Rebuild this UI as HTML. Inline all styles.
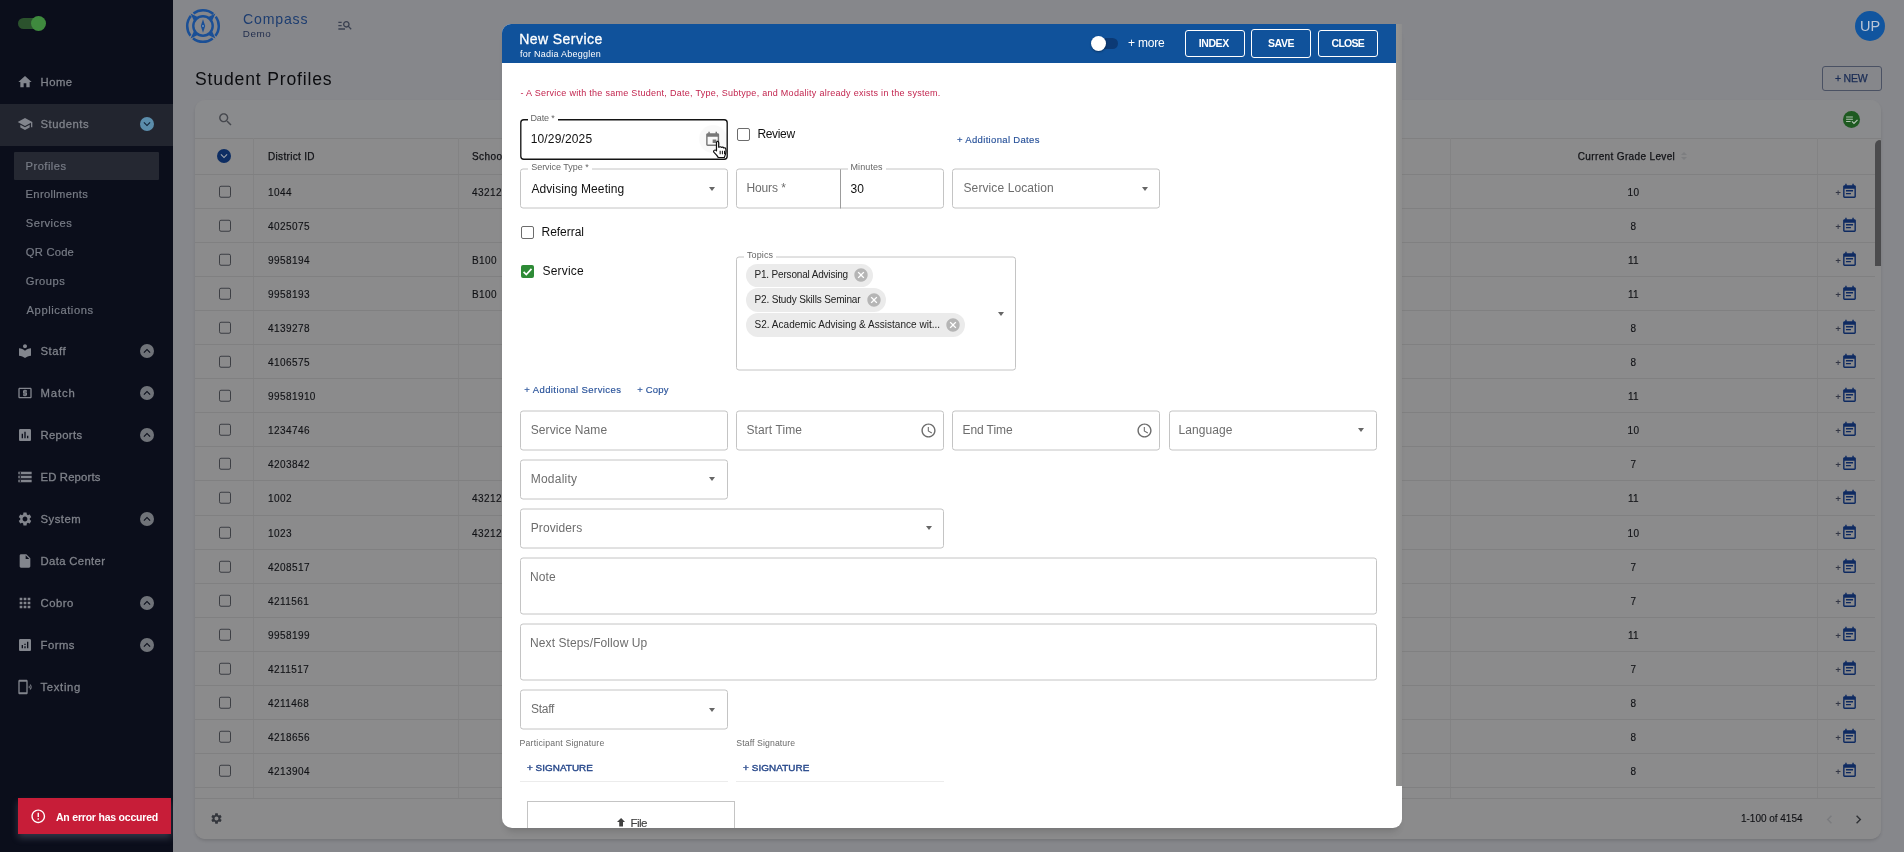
<!DOCTYPE html>
<html lang="en">
<head>
<meta charset="utf-8">
<title>Compass - Student Profiles</title>
<style>
*{box-sizing:border-box;margin:0;padding:0}
html,body{width:1904px;height:852px;overflow:hidden}
body{position:relative;background:#86878b;font-family:"Liberation Sans",Arial,sans-serif;color:#0c0d10;font-size:11px}
.a{position:absolute}
.t{position:absolute;white-space:nowrap;line-height:1;transform:translateY(-50%)}
svg{display:block}
#side,#main,#dlg{will-change:transform}
/* ---------- sidebar ---------- */
#side{position:absolute;left:0;top:0;width:173px;height:852px;background:#0b0e1b}
#side .mi{margin-top:1px;position:absolute;left:40px;color:#7f828a;font-size:11.3px;letter-spacing:.5px;-webkit-text-stroke:.3px #7f828a;white-space:nowrap;line-height:1;transform:translateY(-50%)}
#side .sub{margin-top:1.3px;position:absolute;left:25px;color:#787c86;font-size:11.2px;letter-spacing:.45px;-webkit-text-stroke:.2px #787c86;white-space:nowrap;line-height:1;transform:translateY(-50%)}
#side .ic{position:absolute;left:17px;width:16px;height:16px;transform:translateY(-50%)}
#side .ch{position:absolute;left:140px;width:14px;height:14px;border-radius:50%;background:#707379;transform:translateY(-50%)}
/* ---------- main ---------- */
#card{position:absolute;left:195px;top:100px;width:1686px;height:739px;background:#8b8b8c;border-radius:10px;box-shadow:0 2px 3px rgba(0,0,0,.12);overflow:hidden}
.hl{position:absolute;left:0;width:1680px;height:1px;background:#808081}
.vl{position:absolute;top:38px;width:1px;height:660px;background:#838384}
.cell{position:absolute;white-space:nowrap;line-height:1;transform:translateY(-50%);font-size:10px;color:#111216;letter-spacing:.42px;margin-top:0;-webkit-text-stroke:.12px #111216}
.cb{position:absolute;left:23.5px;width:12.5px;height:12.5px;border:1.5px solid #3d3f44;border-radius:2px;transform:translateY(-50%)}
/* ---------- dialog ---------- */
#dlg{position:absolute;left:502px;top:24px;width:900px;height:804px;background:#fff;box-shadow:0 7px 7px -4px rgba(0,0,0,.16);border-radius:9px 0 9px 10px;overflow:hidden}
#dh{position:absolute;left:0;top:0;width:894px;height:38.5px;background:#10529b}
.fld{position:absolute;border:1px solid #c4c4c4;border-radius:3px;background:#fff;transform:translateY(.5px)}
.lab{margin-top:-.6px;position:absolute;white-space:nowrap;line-height:1;transform:translateY(-50%);font-size:12px;color:#6d6d6d;letter-spacing:.1px}
.val{position:absolute;white-space:nowrap;line-height:1;transform:translateY(-50%);font-size:12px;color:#111}
.fl{position:absolute;white-space:nowrap;line-height:1;transform:translateY(-50%);font-size:9px;color:#666;background:#fff;padding:0 3px;letter-spacing:.1px}
.lnk{-webkit-text-stroke:.15px #28529a;position:absolute;white-space:nowrap;line-height:1;transform:translateY(-50%);font-size:9.5px;color:#28529a;letter-spacing:.2px}
.dd{position:absolute;width:0;height:0;border-left:3.5px solid transparent;border-right:3.5px solid transparent;border-top:4px solid #666}
</style>
</head>
<body>

<!-- ================= SIDEBAR ================= -->
<div id="side">
<div class="a" style="left:18px;top:18px;width:26px;height:11px;border-radius:6px;background:#2b522d"></div>
<div class="a" style="left:31px;top:16px;width:15px;height:15px;border-radius:50%;background:#3f8a3e"></div>
<div class="a" style="left:0;top:104px;width:173px;height:42px;background:#22252f"></div>
<div class="a" style="left:14px;top:152px;width:145px;height:28px;background:#252832;border-radius:1px"></div>
<svg class="ic" style="top:82px" viewBox="0 0 24 24"><path fill="#82858d" d="M10 20v-6h4v6h5v-8h3L12 3 2 12h3v8z"/></svg>
<div class="mi" id="mi_Home" style="top:82px;left:40.50px">Home</div>
<svg class="ic" style="top:124px" viewBox="0 0 24 24"><path fill="#82858d" d="M5 13.18v4L12 21l7-3.82v-4L12 17l-7-3.82zM12 3L1 9l11 6 9-4.91V17h2V9L12 3z"/></svg>
<div class="mi" id="mi_Students" style="top:124px;left:40.50px">Students</div>
<div class="ch" style="top:124px;background:#5b8dab"><svg viewBox="0 0 24 24" width="14" height="14"><path fill="#12253a" d="M16.59 8.59L12 13.17 7.410 8.590 6 10l6 6 6-6z"/></svg></div>
<svg class="ic" style="top:351px" viewBox="0 0 24 24"><path fill="#82858d" d="M12 11.55C9.64 9.35 6.48 8 3 8v11c3.48 0 6.64 1.35 9 3.55 2.36-2.19 5.52-3.55 9-3.55V8c-3.48 0-6.64 1.35-9 3.55zM12 8c1.66 0 3-1.34 3-3s-1.34-3-3-3-3 1.34-3 3 1.34 3 3 3z"/></svg>
<div class="mi" id="mi_Staff" style="top:351px;left:40.50px">Staff</div>
<div class="ch" style="top:351px"><svg viewBox="0 0 24 24" width="14" height="14"><path fill="#0b0e1b" d="M12 8l-6 6 1.41 1.41L12 10.83l4.59 4.58L18 14z"/></svg></div>
<svg class="ic" style="top:393px" viewBox="0 0 24 24"><path fill="#82858d" d="M11 17h2v-1h1c.55 0 1-.45 1-1v-3c0-.55-.45-1-1-1h-3v-1h4V8h-2V7h-2v1h-1c-.55 0-1 .45-1 1v3c0 .55.45 1 1 1h3v1H9v2h2v1zm9-13H4c-1.11 0-1.99.89-1.99 2L2 18c0 1.11.89 2 2 2h16c1.11 0 2-.89 2-2V6c0-1.11-.89-2-2-2zm0 14H4V6h16v12z"/></svg>
<div class="mi" id="mi_Match" style="top:393px;left:40.50px;letter-spacing:0.875px">Match</div>
<div class="ch" style="top:393px"><svg viewBox="0 0 24 24" width="14" height="14"><path fill="#0b0e1b" d="M12 8l-6 6 1.41 1.41L12 10.83l4.59 4.58L18 14z"/></svg></div>
<svg class="ic" style="top:435px" viewBox="0 0 24 24"><path fill="#82858d" d="M19 3H5c-1.1 0-2 .9-2 2v14c0 1.1.9 2 2 2h14c1.1 0 2-.9 2-2V5c0-1.1-.9-2-2-2zM9 17H7v-7h2v7zm4 0h-2V7h2v10zm4 0h-2v-4h2v4z"/></svg>
<div class="mi" id="mi_Reports" style="top:435px;letter-spacing:0.333px;left:40.50px">Reports</div>
<div class="ch" style="top:435px"><svg viewBox="0 0 24 24" width="14" height="14"><path fill="#0b0e1b" d="M12 8l-6 6 1.41 1.41L12 10.83l4.59 4.58L18 14z"/></svg></div>
<svg class="ic" style="top:477px" viewBox="0 0 24 24"><path fill="#82858d" d="M2 20h20v-4H2v4zm2-3h2v2H4v-2zM2 4v4h20V4H2zm4 3H4V5h2v2zm-4 7h20v-4H2v4zm2-3h2v2H4v-2z"/></svg>
<div class="mi" id="mi_EDReports" style="top:477px;letter-spacing:0.167px;left:40.50px">ED Reports</div>
<svg class="ic" style="top:519px" viewBox="0 0 24 24"><path fill="#82858d" d="M19.14 12.94c.04-.3.06-.61.06-.94 0-.32-.02-.64-.07-.94l2.03-1.58c.18-.14.23-.41.12-.61l-1.92-3.32c-.12-.22-.37-.29-.59-.22l-2.39.96c-.5-.38-1.03-.7-1.62-.94l-.36-2.54c-.04-.24-.24-.41-.48-.41h-3.84c-.24 0-.43.17-.47.41l-.36 2.54c-.59.24-1.13.57-1.62.94l-2.39-.96c-.22-.08-.47 0-.59.22L2.74 8.87c-.12.21-.08.47.12.61l2.03 1.58c-.05.3-.09.63-.09.94s.02.64.07.94l-2.03 1.58c-.18.14-.23.41-.12.61l1.92 3.32c.12.22.37.29.59.22l2.39-.96c.5.38 1.03.7 1.62.94l.36 2.54c.05.24.24.41.48.41h3.84c.24 0 .44-.17.47-.41l.36-2.54c.59-.24 1.13-.56 1.62-.94l2.39.96c.22.08.47 0 .59-.22l1.92-3.32c.12-.22.07-.47-.12-.61l-2.01-1.58zM12 15.6c-1.98 0-3.6-1.62-3.6-3.6s1.62-3.6 3.6-3.6 3.6 1.62 3.6 3.6-1.62 3.6-3.6 3.6z"/></svg>
<div class="mi" id="mi_System" style="top:519px;left:40.50px;letter-spacing:0.500px">System</div>
<div class="ch" style="top:519px"><svg viewBox="0 0 24 24" width="14" height="14"><path fill="#0b0e1b" d="M12 8l-6 6 1.41 1.41L12 10.83l4.59 4.58L18 14z"/></svg></div>
<svg class="ic" style="top:561px" viewBox="0 0 24 24"><path fill="#82858d" d="M6 2c-1.1 0-1.99.9-1.99 2L4 20c0 1.1.89 2 1.99 2H18c1.1 0 2-.9 2-2V8l-6-6H6zm7 7V3.5L18.5 9H13z"/></svg>
<div class="mi" id="mi_DataCenter" style="top:561px;letter-spacing:0.350px;left:40.50px">Data Center</div>
<svg class="ic" style="top:603px" viewBox="0 0 24 24"><path fill="#82858d" d="M4 8h4V4H4v4zm6 12h4v-4h-4v4zm-6 0h4v-4H4v4zm0-6h4v-4H4v4zm6 0h4v-4h-4v4zm6-10v4h4V4h-4zm-6 4h4V4h-4v4zm6 6h4v-4h-4v4zm0 6h4v-4h-4v4z"/></svg>
<div class="mi" id="mi_Cobro" style="top:603px;left:40.50px;letter-spacing:0.500px">Cobro</div>
<div class="ch" style="top:603px"><svg viewBox="0 0 24 24" width="14" height="14"><path fill="#0b0e1b" d="M12 8l-6 6 1.41 1.41L12 10.83l4.59 4.58L18 14z"/></svg></div>
<svg class="ic" style="top:645px" viewBox="0 0 24 24"><path fill="#82858d" d="M19 3H5c-1.1 0-2 .9-2 2v14c0 1.1.9 2 2 2h14c1.1 0 2-.9 2-2V5c0-1.1-.9-2-2-2zM9 17H7v-5h2v5zm4 0h-2v-3h2v3zm0-5h-2v-2h2v2zm4 5h-2V7h2v10z"/></svg>
<div class="mi" id="mi_Forms" style="top:645px;left:40.50px">Forms</div>
<div class="ch" style="top:645px"><svg viewBox="0 0 24 24" width="14" height="14"><path fill="#0b0e1b" d="M12 8l-6 6 1.41 1.41L12 10.83l4.59 4.58L18 14z"/></svg></div>
<svg class="ic" style="top:687px" viewBox="0 0 24 24"><path fill="#82858d" d="M14 1H4c-1.1 0-2 .9-2 2v18c0 1.1.9 2 2 2h10c1.1 0 2-.9 2-2V3c0-1.1-.9-2-2-2zm0 19H4V4h10v16zm4.2-10.3l-.9.9c.7.7.7 1.9 0 2.6l.9.9c1.3-1.2 1.3-3.100 0-4.400zM20.100 7.700l-1 1c1.800 1.900 1.800 4.700 0 6.600l1 1c2.500-2.400 2.500-6.200 0-8.600z"/></svg>
<div class="mi" id="mi_Texting" style="top:687px;letter-spacing:0.667px;left:40.50px">Texting</div>
<div class="sub" id="sub_Profiles" style="top:166px;left:25.60px">Profiles</div>
<div class="sub" id="sub_Enrollments" style="top:194px;letter-spacing:0.310px;left:25.60px">Enrollments</div>
<div class="sub" id="sub_Services" style="top:223px;left:25.80px">Services</div>
<div class="sub" id="sub_QRCode" style="top:252px;letter-spacing:0.233px;left:25.80px">QR Code</div>
<div class="sub" id="sub_Groups" style="top:281px;left:25.80px">Groups</div>
<div class="sub" id="sub_Applications" style="top:310px;letter-spacing:0.559px;left:26.60px">Applications</div>
<div class="a" style="left:18px;top:798px;width:153px;height:36px;background:#c71d38;box-shadow:0 4px 7px rgba(150,160,185,.28)"></div>
<svg class="a" style="left:29.850px;top:808px" width="16.500" height="16.500" viewBox="0 0 24 24"><path fill="#fff" d="M11 15h2v2h-2zm0-8h2v6h-2zm.99-5C6.47 2 2 6.48 2 12s4.47 10 9.990 10C17.520 22 22 17.520 22 12S17.520 2 11.990 2zM12 20c-4.420 0-8-3.580-8-8s3.580-8 8-8 8 3.580 8 8-3.580 8-8 8z"/></svg>
<div class="t" id="toast" style="left:56px;top:816.500px;font-size:10.500px;font-weight:bold;color:#fff;letter-spacing:-0.211px">An error has occured</div>
</div>

<!-- ================= MAIN ================= -->
<div id="main">
<svg class="a" style="left:185px;top:7.500px" width="36" height="36" viewBox="0 0 36 36"><g fill="none" stroke="#1a4f96">
<circle cx="18" cy="18" r="15.800" stroke-width="2.500" stroke-dasharray="21.300 3.520" stroke-dashoffset="10.650"/><circle cx="18" cy="18" r="9.700" stroke-width="2.400"/></g>
<path fill="#1a4f96" d="M23.30 27.12L30.45 30.45L27.12 23.30zM8.88 23.30L5.55 30.45L12.70 27.12zM12.70 8.88L5.55 5.55L8.88 12.70zM27.12 12.70L30.45 5.55L23.30 8.88z"/>
<path fill="#1a4f96" d="M18 11.300l2.200 6.700-2.200 6.700-2.200-6.700z"/><circle cx="18" cy="18" r=".9" fill="#7d9cc4"/></svg>
<div class="t" id="compass" style="left:243.00px;top:18.500px;font-size:14.100px;color:#1d3d70;letter-spacing:0.833px">Compass</div>
<div class="t" id="demo" style="left:242.80px;top:33.500px;font-size:9.900px;color:#232f4e;letter-spacing:0.500px">Demo</div>
<svg class="a" style="left:337px;top:17.300px" width="16" height="16" viewBox="0 0 24 24"><path fill="#3a4050" d="M7 9H2V7h5v2zm0 3H2v2h5v-2zm13.59 7l-3.83-3.83c-.8.52-1.74.83-2.76.83-2.76 0-5-2.24-5-5s2.24-5 5-5 5 2.24 5 5c0 1.02-.31 1.96-.83 2.75L22 17.59 20.59 19zM17 11c0-1.65-1.35-3-3-3s-3 1.35-3 3 1.35 3 3 3 3-1.35 3-3zM2 19h10v-2H2v2z"/></svg>
<div class="a" style="left:1855px;top:11px;width:30px;height:30px;border-radius:50%;background:#11559f"></div>
<div class="t" style="left:1855px;top:25.500px;width:30px;text-align:center;font-size:14.500px;color:#bcc6d6">UP</div>
<div class="t" id="title" style="left:195px;top:79.500px;font-size:17.600px;color:#0b0c0f;letter-spacing:.83px">Student Profiles</div>
<div class="a" style="left:1822px;top:65.500px;width:59.500px;height:25px;border:1px solid #4a5163;border-radius:3px"></div>
<div class="t" id="new" style="left:1835.00px;top:77.700px;font-size:10.500px;color:#1a2c55;letter-spacing:-0.250px;-webkit-text-stroke:.25px #1a2c55">+ NEW</div>
<div id="card">
<div class="a" style="left:0;top:0;width:1686px;height:38px;background:#8a8b8d"></div>
<svg class="a" style="left:21.500px;top:10.800px" width="17" height="17" viewBox="0 0 24 24"><path fill="#45474d" d="M15.5 14h-.79l-.28-.27C15.41 12.59 16 11.11 16 9.5 16 5.91 13.09 3 9.5 3S3 5.91 3 9.5 5.91 16 9.5 16c1.61 0 3.09-.59 4.23-1.57l.27.28v.79l5 4.99L20.49 19l-4.99-5zm-6 0C7.01 14 5 11.99 5 9.5S7.01 5 9.5 5 14 7.01 14 9.5 11.99 14 9.5 14z"/></svg>
<div class="a" style="left:1648px;top:11px;width:17px;height:17px;border-radius:50%;background:#1e5a21"></div>
<svg class="a" style="left:1649.800px;top:12.800px" width="13.500" height="13.500" viewBox="0 0 24 24"><path fill="#b2c4b3" d="M14 10H2v2h12v-2zm0-4H2v2h12V6zM2 16h8v-2H2v2zm19.5-4.5L23 13l-6.99 7-4.51-4.5L13 14l3.01 3 5.49-5.5z"/></svg>
<div class="hl" style="top:38px;width:1686px"></div>
<div class="vl" style="left:58px"></div>
<div class="vl" style="left:263px"></div>
<div class="vl" style="left:1255px"></div>
<div class="vl" style="left:1622px"></div>
<div class="a" style="left:22px;top:49px;width:14px;height:14px;border-radius:50%;background:#0d2d63"></div>
<svg class="a" style="left:22px;top:49px" width="14" height="14" viewBox="0 0 24 24"><path fill="#9aa0aa" d="M16.590 8.590L12 13.170 7.410 8.590 6 10l6 6 6-6z"/></svg>
<div class="cell" id="hDistrict" style="left:73px;top:56.500px;-webkit-text-stroke:.25px #111216;letter-spacing:0.320px">District ID</div>
<div class="cell" style="left:277px;top:56.500px;-webkit-text-stroke:.25px #111216">Schoo</div>
<div class="cell" id="hCGL" style="left:1382.80px;top:56.500px;-webkit-text-stroke:.25px #111216;letter-spacing:0.356px">Current Grade Level</div>
<div class="a" style="left:1486px;top:51.500px;border-left:3px solid transparent;border-right:3px solid transparent;border-bottom:3.500px solid #7d7e80"></div>
<div class="a" style="left:1486px;top:57px;border-left:3px solid transparent;border-right:3px solid transparent;border-top:3.500px solid #7d7e80"></div>
<div class="hl" style="top:74px"></div>
<div class="cb" style="top:91.5px"></div>
<div class="cell" style="left:73px;top:92.5px">1044</div>
<div class="cell" style="left:277px;top:92.5px">43212</div>
<div class="cell" style="left:1255px;width:367px;text-align:center;top:92.5px">10</div>
<div class="cell" style="left:1640.5px;top:92.5px;font-size:9px;color:#2a3350">+</div>
<svg class="a" style="left:1646.300px;top:82.6px" width="17" height="17" viewBox="0 0 24 24"><path fill="#0e2a61" d="M17 10H7v2h10v-2zm2-7h-1V1h-2v2H8V1H6v2H5c-1.11 0-1.99.9-1.99 2L3 19c0 1.1.89 2 2 2h14c1.1 0 2-.9 2-2V5c0-1.1-.9-2-2-2zm0 16H5V8h14v11zm-5-5H7v2h7v-2z"/></svg>
<div class="hl" style="top:108px"></div>
<div class="cb" style="top:125.5px"></div>
<div class="cell" style="left:73px;top:126.5px">4025075</div>
<div class="cell" style="left:1255px;width:367px;text-align:center;top:126.5px">8</div>
<div class="cell" style="left:1640.5px;top:126.5px;font-size:9px;color:#2a3350">+</div>
<svg class="a" style="left:1646.300px;top:116.6px" width="17" height="17" viewBox="0 0 24 24"><path fill="#0e2a61" d="M17 10H7v2h10v-2zm2-7h-1V1h-2v2H8V1H6v2H5c-1.11 0-1.99.9-1.99 2L3 19c0 1.1.89 2 2 2h14c1.1 0 2-.9 2-2V5c0-1.1-.9-2-2-2zm0 16H5V8h14v11zm-5-5H7v2h7v-2z"/></svg>
<div class="hl" style="top:142px"></div>
<div class="cb" style="top:159.5px"></div>
<div class="cell" style="left:73px;top:160.5px">9958194</div>
<div class="cell" style="left:277px;top:160.5px">B100</div>
<div class="cell" style="left:1255px;width:367px;text-align:center;top:160.5px">11</div>
<div class="cell" style="left:1640.5px;top:160.5px;font-size:9px;color:#2a3350">+</div>
<svg class="a" style="left:1646.300px;top:150.6px" width="17" height="17" viewBox="0 0 24 24"><path fill="#0e2a61" d="M17 10H7v2h10v-2zm2-7h-1V1h-2v2H8V1H6v2H5c-1.11 0-1.99.9-1.99 2L3 19c0 1.1.89 2 2 2h14c1.1 0 2-.9 2-2V5c0-1.1-.9-2-2-2zm0 16H5V8h14v11zm-5-5H7v2h7v-2z"/></svg>
<div class="hl" style="top:176px"></div>
<div class="cb" style="top:193.5px"></div>
<div class="cell" style="left:73px;top:194.5px">9958193</div>
<div class="cell" style="left:277px;top:194.5px">B100</div>
<div class="cell" style="left:1255px;width:367px;text-align:center;top:194.5px">11</div>
<div class="cell" style="left:1640.5px;top:194.5px;font-size:9px;color:#2a3350">+</div>
<svg class="a" style="left:1646.300px;top:184.6px" width="17" height="17" viewBox="0 0 24 24"><path fill="#0e2a61" d="M17 10H7v2h10v-2zm2-7h-1V1h-2v2H8V1H6v2H5c-1.11 0-1.99.9-1.99 2L3 19c0 1.1.89 2 2 2h14c1.1 0 2-.9 2-2V5c0-1.1-.9-2-2-2zm0 16H5V8h14v11zm-5-5H7v2h7v-2z"/></svg>
<div class="hl" style="top:210px"></div>
<div class="cb" style="top:227.5px"></div>
<div class="cell" style="left:73px;top:228.5px">4139278</div>
<div class="cell" style="left:1255px;width:367px;text-align:center;top:228.5px">8</div>
<div class="cell" style="left:1640.5px;top:228.5px;font-size:9px;color:#2a3350">+</div>
<svg class="a" style="left:1646.300px;top:218.6px" width="17" height="17" viewBox="0 0 24 24"><path fill="#0e2a61" d="M17 10H7v2h10v-2zm2-7h-1V1h-2v2H8V1H6v2H5c-1.11 0-1.99.9-1.99 2L3 19c0 1.1.89 2 2 2h14c1.1 0 2-.9 2-2V5c0-1.1-.9-2-2-2zm0 16H5V8h14v11zm-5-5H7v2h7v-2z"/></svg>
<div class="hl" style="top:244px"></div>
<div class="cb" style="top:261.5px"></div>
<div class="cell" style="left:73px;top:262.5px">4106575</div>
<div class="cell" style="left:1255px;width:367px;text-align:center;top:262.5px">8</div>
<div class="cell" style="left:1640.5px;top:262.5px;font-size:9px;color:#2a3350">+</div>
<svg class="a" style="left:1646.300px;top:252.6px" width="17" height="17" viewBox="0 0 24 24"><path fill="#0e2a61" d="M17 10H7v2h10v-2zm2-7h-1V1h-2v2H8V1H6v2H5c-1.11 0-1.99.9-1.99 2L3 19c0 1.1.89 2 2 2h14c1.1 0 2-.9 2-2V5c0-1.1-.9-2-2-2zm0 16H5V8h14v11zm-5-5H7v2h7v-2z"/></svg>
<div class="hl" style="top:278px"></div>
<div class="cb" style="top:295.5px"></div>
<div class="cell" style="left:73px;top:296.5px">99581910</div>
<div class="cell" style="left:1255px;width:367px;text-align:center;top:296.5px">11</div>
<div class="cell" style="left:1640.5px;top:296.5px;font-size:9px;color:#2a3350">+</div>
<svg class="a" style="left:1646.300px;top:286.6px" width="17" height="17" viewBox="0 0 24 24"><path fill="#0e2a61" d="M17 10H7v2h10v-2zm2-7h-1V1h-2v2H8V1H6v2H5c-1.11 0-1.99.9-1.99 2L3 19c0 1.1.89 2 2 2h14c1.1 0 2-.9 2-2V5c0-1.1-.9-2-2-2zm0 16H5V8h14v11zm-5-5H7v2h7v-2z"/></svg>
<div class="hl" style="top:312px"></div>
<div class="cb" style="top:329.5px"></div>
<div class="cell" style="left:73px;top:330.5px">1234746</div>
<div class="cell" style="left:1255px;width:367px;text-align:center;top:330.5px">10</div>
<div class="cell" style="left:1640.5px;top:330.5px;font-size:9px;color:#2a3350">+</div>
<svg class="a" style="left:1646.300px;top:320.6px" width="17" height="17" viewBox="0 0 24 24"><path fill="#0e2a61" d="M17 10H7v2h10v-2zm2-7h-1V1h-2v2H8V1H6v2H5c-1.11 0-1.99.9-1.99 2L3 19c0 1.1.89 2 2 2h14c1.1 0 2-.9 2-2V5c0-1.1-.9-2-2-2zm0 16H5V8h14v11zm-5-5H7v2h7v-2z"/></svg>
<div class="hl" style="top:346px"></div>
<div class="cb" style="top:363.5px"></div>
<div class="cell" style="left:73px;top:364.5px">4203842</div>
<div class="cell" style="left:1255px;width:367px;text-align:center;top:364.5px">7</div>
<div class="cell" style="left:1640.5px;top:364.5px;font-size:9px;color:#2a3350">+</div>
<svg class="a" style="left:1646.300px;top:354.6px" width="17" height="17" viewBox="0 0 24 24"><path fill="#0e2a61" d="M17 10H7v2h10v-2zm2-7h-1V1h-2v2H8V1H6v2H5c-1.11 0-1.99.9-1.99 2L3 19c0 1.1.89 2 2 2h14c1.1 0 2-.9 2-2V5c0-1.1-.9-2-2-2zm0 16H5V8h14v11zm-5-5H7v2h7v-2z"/></svg>
<div class="hl" style="top:380px"></div>
<div class="cb" style="top:397.5px"></div>
<div class="cell" style="left:73px;top:398.5px">1002</div>
<div class="cell" style="left:277px;top:398.5px">43212</div>
<div class="cell" style="left:1255px;width:367px;text-align:center;top:398.5px">11</div>
<div class="cell" style="left:1640.5px;top:398.5px;font-size:9px;color:#2a3350">+</div>
<svg class="a" style="left:1646.300px;top:388.6px" width="17" height="17" viewBox="0 0 24 24"><path fill="#0e2a61" d="M17 10H7v2h10v-2zm2-7h-1V1h-2v2H8V1H6v2H5c-1.11 0-1.99.9-1.99 2L3 19c0 1.1.89 2 2 2h14c1.1 0 2-.9 2-2V5c0-1.1-.9-2-2-2zm0 16H5V8h14v11zm-5-5H7v2h7v-2z"/></svg>
<div class="hl" style="top:415px"></div>
<div class="cb" style="top:432.5px"></div>
<div class="cell" style="left:73px;top:433.5px">1023</div>
<div class="cell" style="left:277px;top:433.5px">43212</div>
<div class="cell" style="left:1255px;width:367px;text-align:center;top:433.5px">10</div>
<div class="cell" style="left:1640.5px;top:433.5px;font-size:9px;color:#2a3350">+</div>
<svg class="a" style="left:1646.300px;top:423.6px" width="17" height="17" viewBox="0 0 24 24"><path fill="#0e2a61" d="M17 10H7v2h10v-2zm2-7h-1V1h-2v2H8V1H6v2H5c-1.11 0-1.99.9-1.99 2L3 19c0 1.1.89 2 2 2h14c1.1 0 2-.9 2-2V5c0-1.1-.9-2-2-2zm0 16H5V8h14v11zm-5-5H7v2h7v-2z"/></svg>
<div class="hl" style="top:449px"></div>
<div class="cb" style="top:466.5px"></div>
<div class="cell" style="left:73px;top:467.5px">4208517</div>
<div class="cell" style="left:1255px;width:367px;text-align:center;top:467.5px">7</div>
<div class="cell" style="left:1640.5px;top:467.5px;font-size:9px;color:#2a3350">+</div>
<svg class="a" style="left:1646.300px;top:457.6px" width="17" height="17" viewBox="0 0 24 24"><path fill="#0e2a61" d="M17 10H7v2h10v-2zm2-7h-1V1h-2v2H8V1H6v2H5c-1.11 0-1.99.9-1.99 2L3 19c0 1.1.89 2 2 2h14c1.1 0 2-.9 2-2V5c0-1.1-.9-2-2-2zm0 16H5V8h14v11zm-5-5H7v2h7v-2z"/></svg>
<div class="hl" style="top:483px"></div>
<div class="cb" style="top:500.5px"></div>
<div class="cell" style="left:73px;top:501.5px">4211561</div>
<div class="cell" style="left:1255px;width:367px;text-align:center;top:501.5px">7</div>
<div class="cell" style="left:1640.5px;top:501.5px;font-size:9px;color:#2a3350">+</div>
<svg class="a" style="left:1646.300px;top:491.6px" width="17" height="17" viewBox="0 0 24 24"><path fill="#0e2a61" d="M17 10H7v2h10v-2zm2-7h-1V1h-2v2H8V1H6v2H5c-1.11 0-1.99.9-1.99 2L3 19c0 1.1.89 2 2 2h14c1.1 0 2-.9 2-2V5c0-1.1-.9-2-2-2zm0 16H5V8h14v11zm-5-5H7v2h7v-2z"/></svg>
<div class="hl" style="top:517px"></div>
<div class="cb" style="top:534.5px"></div>
<div class="cell" style="left:73px;top:535.5px">9958199</div>
<div class="cell" style="left:1255px;width:367px;text-align:center;top:535.5px">11</div>
<div class="cell" style="left:1640.5px;top:535.5px;font-size:9px;color:#2a3350">+</div>
<svg class="a" style="left:1646.300px;top:525.6px" width="17" height="17" viewBox="0 0 24 24"><path fill="#0e2a61" d="M17 10H7v2h10v-2zm2-7h-1V1h-2v2H8V1H6v2H5c-1.11 0-1.99.9-1.99 2L3 19c0 1.1.89 2 2 2h14c1.1 0 2-.9 2-2V5c0-1.1-.9-2-2-2zm0 16H5V8h14v11zm-5-5H7v2h7v-2z"/></svg>
<div class="hl" style="top:551px"></div>
<div class="cb" style="top:568.5px"></div>
<div class="cell" style="left:73px;top:569.5px">4211517</div>
<div class="cell" style="left:1255px;width:367px;text-align:center;top:569.5px">7</div>
<div class="cell" style="left:1640.5px;top:569.5px;font-size:9px;color:#2a3350">+</div>
<svg class="a" style="left:1646.300px;top:559.6px" width="17" height="17" viewBox="0 0 24 24"><path fill="#0e2a61" d="M17 10H7v2h10v-2zm2-7h-1V1h-2v2H8V1H6v2H5c-1.11 0-1.99.9-1.99 2L3 19c0 1.1.89 2 2 2h14c1.1 0 2-.9 2-2V5c0-1.1-.9-2-2-2zm0 16H5V8h14v11zm-5-5H7v2h7v-2z"/></svg>
<div class="hl" style="top:585px"></div>
<div class="cb" style="top:602.5px"></div>
<div class="cell" style="left:73px;top:603.5px">4211468</div>
<div class="cell" style="left:1255px;width:367px;text-align:center;top:603.5px">8</div>
<div class="cell" style="left:1640.5px;top:603.5px;font-size:9px;color:#2a3350">+</div>
<svg class="a" style="left:1646.300px;top:593.6px" width="17" height="17" viewBox="0 0 24 24"><path fill="#0e2a61" d="M17 10H7v2h10v-2zm2-7h-1V1h-2v2H8V1H6v2H5c-1.11 0-1.99.9-1.99 2L3 19c0 1.1.89 2 2 2h14c1.1 0 2-.9 2-2V5c0-1.1-.9-2-2-2zm0 16H5V8h14v11zm-5-5H7v2h7v-2z"/></svg>
<div class="hl" style="top:619px"></div>
<div class="cb" style="top:636.5px"></div>
<div class="cell" style="left:73px;top:637.5px">4218656</div>
<div class="cell" style="left:1255px;width:367px;text-align:center;top:637.5px">8</div>
<div class="cell" style="left:1640.5px;top:637.5px;font-size:9px;color:#2a3350">+</div>
<svg class="a" style="left:1646.300px;top:627.6px" width="17" height="17" viewBox="0 0 24 24"><path fill="#0e2a61" d="M17 10H7v2h10v-2zm2-7h-1V1h-2v2H8V1H6v2H5c-1.11 0-1.99.9-1.99 2L3 19c0 1.1.89 2 2 2h14c1.1 0 2-.9 2-2V5c0-1.1-.9-2-2-2zm0 16H5V8h14v11zm-5-5H7v2h7v-2z"/></svg>
<div class="hl" style="top:653px"></div>
<div class="cb" style="top:670.5px"></div>
<div class="cell" style="left:73px;top:671.5px">4213904</div>
<div class="cell" style="left:1255px;width:367px;text-align:center;top:671.5px">8</div>
<div class="cell" style="left:1640.5px;top:671.5px;font-size:9px;color:#2a3350">+</div>
<svg class="a" style="left:1646.300px;top:661.6px" width="17" height="17" viewBox="0 0 24 24"><path fill="#0e2a61" d="M17 10H7v2h10v-2zm2-7h-1V1h-2v2H8V1H6v2H5c-1.11 0-1.99.9-1.99 2L3 19c0 1.1.89 2 2 2h14c1.1 0 2-.9 2-2V5c0-1.1-.9-2-2-2zm0 16H5V8h14v11zm-5-5H7v2h7v-2z"/></svg>
<div class="hl" style="top:687px"></div>
<div class="a" style="left:1680px;top:39.500px;width:6px;height:126px;background:#4b4b4d;border-radius:5px 1px 0 0"></div>
<div class="a" style="left:0;top:698px;width:1686px;height:41px;background:#8b8b8c;border-top:1px solid #808081"></div>
<svg class="a" style="left:15px;top:712px" width="13" height="13" viewBox="0 0 24 24"><path fill="#33363c" d="M19.14 12.94c.04-.3.06-.61.06-.94 0-.32-.02-.64-.07-.94l2.03-1.58c.18-.14.23-.41.12-.61l-1.92-3.32c-.12-.22-.37-.29-.59-.22l-2.39.96c-.5-.38-1.03-.7-1.62-.94l-.36-2.54c-.04-.24-.24-.41-.48-.41h-3.84c-.24 0-.43.17-.47.41l-.36 2.54c-.59.24-1.13.57-1.62.94l-2.39-.96c-.22-.08-.47 0-.59.22L2.74 8.87c-.12.21-.08.47.12.61l2.03 1.58c-.05.3-.09.63-.09.94s.02.64.07.94l-2.03 1.58c-.18.14-.23.41-.12.61l1.92 3.32c.12.22.37.29.59.22l2.39-.96c.5.38 1.03.7 1.62.94l.36 2.54c.05.24.24.41.48.41h3.84c.24 0 .44-.17.47-.41l.36-2.54c.59-.24 1.13-.56 1.62-.94l2.39.96c.22.08.47 0 .59-.22l1.92-3.32c.12-.22.07-.47-.12-.61l-2.01-1.58zM12 15.6c-1.98 0-3.6-1.62-3.6-3.6s1.62-3.6 3.6-3.6 3.6 1.62 3.6 3.6-1.62 3.6-3.6 3.6z"/></svg>
<div class="cell" id="pager" style="left:1546px;top:719px;font-size:10px;letter-spacing:-0.017px">1-100 of 4154</div>
<svg class="a" style="left:1625.500px;top:710.500px" width="17" height="17" viewBox="0 0 24 24"><path fill="#7a7b7e" d="M15.410 7.410L14 6l-6 6 6 6 1.410-1.410L10.830 12z"/></svg>
<svg class="a" style="left:1654.500px;top:710.500px" width="17" height="17" viewBox="0 0 24 24"><path fill="#303236" d="M10 6L8.590 7.410 13.170 12l-4.580 4.590L10 18l6-6z"/></svg>
</div>
</div>

<!-- ================= DIALOG ================= -->
<div id="dlg">
<div id="dh"></div>
<div class="t" id="h1" style="left:17.20px;top:14.90px;font-size:14px;color:#fff;letter-spacing:0.440px;-webkit-text-stroke:.3px #fff">New Service</div>
<div class="t" id="h2" style="left:18px;top:30px;font-size:9px;color:#fff;letter-spacing:.25px">for Nadia Abegglen</div>
<div class="a" style="left:595px;top:14px;width:21px;height:11px;border-radius:6px;background:#0c3a75"></div>
<div class="a" style="left:588.7px;top:11.7px;width:15px;height:15px;border-radius:50%;background:#fff;box-shadow:0 1px 2px rgba(0,0,0,.35)"></div>
<div class="t" id="more" style="left:626px;top:19px;font-size:12px;color:#fff;letter-spacing:-0.200px">+ more</div>
<div class="a" style="left:683px;top:6px;width:59.5px;height:27px;border:1px solid #fff;border-radius:3px"></div>
<div class="t" id="bINDEX" style="left:683px;width:59.5px;text-align:center;top:18.80px;font-size:10.500px;font-weight:bold;color:#fff;letter-spacing:-0.400px;padding-right:2px">INDEX</div>
<div class="a" style="left:749px;top:5px;width:60px;height:29px;border:1px solid #fff;border-radius:3px"></div>
<div class="t" id="bSAVE" style="left:749px;width:60px;text-align:center;top:18.80px;font-size:10.500px;font-weight:bold;color:#fff;letter-spacing:-0.467px">SAVE</div>
<div class="a" style="left:816px;top:6px;width:59.5px;height:27px;border:1px solid #fff;border-radius:3px"></div>
<div class="t" id="bCLOSE" style="left:816px;width:59.5px;text-align:center;top:18.80px;font-size:10.500px;font-weight:bold;color:#fff;letter-spacing:-0.775px">CLOSE</div>
<div class="t" id="err" style="left:18.50px;top:69px;font-size:9px;color:#c2244e;letter-spacing:0.281px">- A Service with the same Student, Date, Type, Subtype, and Modality already exists in the system.</div>
<svg class="a" style="left:18px;top:95px" width="208" height="41" viewBox="0 0 208 41"><rect x="0.800" y="0.750" width="206.400" height="39.500" rx="3" fill="#fff" stroke="#141414" stroke-width="1.350"/></svg>
<div class="fl" id="lDate" style="left:25.5px;top:94px;letter-spacing:-0.140px">Date *</div>
<div class="val" id="vDate" style="left:28.7px;top:115px;letter-spacing:.15px">10/29/2025</div>
<div class="a" style="left:196.5px;top:101px;width:28px;height:28px;border-radius:50%;background:rgba(0,0,0,.025)"></div>
<svg class="a" style="left:201.9px;top:106.80000000000001px" width="17.300" height="17" viewBox="0 0 24 24" preserveAspectRatio="none"><path fill="#787878" d="M17 12h-5v5h5v-5zM16 1v2H8V1H6v2H5c-1.11 0-1.99.9-1.99 2L3 19c0 1.1.89 2 2 2h14c1.1 0 2-.9 2-2V5c0-1.1-.9-2-2-2h-1V1h-2zm3 18H5V8h14v11z"/></svg>
<svg class="a" style="left:210.29999999999995px;top:115.5px" width="19" height="19.500" viewBox="0 0 17 19" preserveAspectRatio="none"><path d="M4.500 1.200c.9 0 1.500.6 1.500 1.500v4.300l.5-.1c.6-.5 1.500-.4 1.900.3.600-.5 1.600-.3 2 .5.700-.4 1.700 0 1.900.9.100.3.200 1 .2 2.200 0 2.400-.4 3.600-1.200 5.400l-.3.800H5.500l-.4-.8C4.300 14.800 3.400 13.800 2 12.300c-.8-.8-.7-1.700-.1-2.200.6-.5 1.400-.3 2 .3l.100.100V2.700c0-.9.600-1.500 1.500-1.500z" fill="#fff" stroke="#111" stroke-width="1.100" stroke-linejoin="round"/><path d="M7.300 10.500v3.500M9.300 10.500v3.500M11.200 10.500v3.500" stroke="#111" stroke-width=".9" fill="none"/></svg>
<div class="a" style="left:235.2px;top:104.2px;width:12.500px;height:12.500px;border:1.500px solid #6c6c6c;border-radius:2px"></div>
<div class="val" id="vReview" style="left:255.50px;top:109.90px;letter-spacing:-0.360px">Review</div>
<div class="lnk" id="addDates" style="left:455px;top:116px;letter-spacing:0.329px">+ Additional Dates</div>
<div class="fld" style="left:18px;top:144px;width:208px;height:40px;"></div>
<div class="fl" id="lST" style="left:26.20px;top:143px;letter-spacing:-0.031px">Service Type *</div>
<div class="val" id="vST" style="left:29.40px;top:165px;letter-spacing:.1px">Advising Meeting</div>
<div class="dd" style="left:207.0px;top:163.0px"></div>
<div class="fld" style="left:234px;top:144px;width:105px;height:40px;border-radius:3px 0 0 3px"></div>
<div class="fld" style="left:338px;top:144px;width:104px;height:40px;border-radius:0 3px 3px 0"></div>
<div class="a" style="left:338px;top:145px;width:1px;height:39px;background:#9c9c9c;transform:translateY(.5px)"></div>
<div class="lab" id="lHours" style="left:244.40px;top:164.5px;letter-spacing:-0.100px">Hours *</div>
<div class="fl" id="lMin" style="left:345.50px;top:143px">Minutes</div>
<div class="val" id="v30" style="left:348.50px;top:165px">30</div>
<div class="fld" style="left:450px;top:144px;width:208px;height:40px;"></div>
<div class="lab" id="lSL" style="left:461.50px;top:164.5px">Service Location</div>
<div class="dd" style="left:640.0px;top:163.0px"></div>
<div class="a" style="left:19px;top:202px;width:13px;height:13px;border:1.500px solid #6c6c6c;border-radius:2px"></div>
<div class="val" id="vRef" style="left:39.50px;top:207.90px;letter-spacing:-0.029px">Referral</div>
<div class="a" style="left:19px;top:241px;width:13px;height:13px;background:#2e8b36;border-radius:2px"></div>
<svg class="a" style="left:19px;top:241px" width="13" height="13" viewBox="0 0 13 13"><path d="M2.600 6.800l2.700 2.700 5.200-5.600" fill="none" stroke="#fff" stroke-width="1.700"/></svg>
<div class="val" id="vSvc" style="left:40.50px;top:246.90px;letter-spacing:0.200px">Service</div>
<div class="fld" style="left:234px;top:232px;width:280px;height:114px;"></div>
<div class="fl" id="lTopics" style="left:242px;top:231px">Topics</div>
<div class="a" style="left:243.5px;top:239.5px;width:127.0px;height:23.500px;border-radius:12px;background:#ebebeb"></div>
<div class="t" id="chip0" style="left:252.50px;top:251.2px;font-size:10px;color:#222;letter-spacing:-0.180px">P1. Personal Advising</div>
<svg class="a" style="left:351.2px;top:243.2px" width="16" height="16" viewBox="0 0 24 24"><circle cx="12" cy="12" r="8" fill="#fff"/><path fill="#b5b5b5" d="M12 2C6.47 2 2 6.47 2 12s4.47 10 10 10 10-4.47 10-10S17.53 2 12 2zm5 13.59L15.59 17 12 13.41 8.41 17 7 15.59 10.59 12 7 8.41 8.41 7 12 10.59 15.59 7 17 8.41 13.41 12 17 15.59z"/></svg>
<div class="a" style="left:243.5px;top:264.3px;width:140.0px;height:23.500px;border-radius:12px;background:#ebebeb"></div>
<div class="t" id="chip1" style="left:252.50px;top:276px;font-size:10px;color:#222;letter-spacing:-0.148px">P2. Study Skills Seminar</div>
<svg class="a" style="left:364.2px;top:268px" width="16" height="16" viewBox="0 0 24 24"><circle cx="12" cy="12" r="8" fill="#fff"/><path fill="#b5b5b5" d="M12 2C6.47 2 2 6.47 2 12s4.47 10 10 10 10-4.47 10-10S17.53 2 12 2zm5 13.59L15.59 17 12 13.41 8.41 17 7 15.59 10.59 12 7 8.41 8.41 7 12 10.59 15.59 7 17 8.41 13.41 12 17 15.59z"/></svg>
<div class="a" style="left:243.5px;top:289.3px;width:219.500px;height:23.500px;border-radius:12px;background:#ebebeb"></div>
<div class="t" id="chip2" style="left:252.50px;top:301px;font-size:10px;color:#222;letter-spacing:0.026px">S2. Academic Advising &amp; Assistance wit...</div>
<svg class="a" style="left:443.1px;top:293px" width="16" height="16" viewBox="0 0 24 24"><circle cx="12" cy="12" r="8" fill="#fff"/><path fill="#b5b5b5" d="M12 2C6.47 2 2 6.47 2 12s4.47 10 10 10 10-4.47 10-10S17.53 2 12 2zm5 13.59L15.59 17 12 13.41 8.41 17 7 15.59 10.59 12 7 8.41 8.41 7 12 10.59 15.59 7 17 8.41 13.41 12 17 15.59z"/></svg>
<div class="dd" style="left:496.0px;top:288.3px"></div>
<div class="lnk" id="addSvc" style="left:22.2px;top:366px;letter-spacing:0.415px">+ Additional Services</div>
<div class="lnk" id="copy" style="left:135.2px;top:366px">+ Copy</div>
<div class="fld" style="left:18px;top:386px;width:208px;height:40px;"></div>
<div class="lab" id="lSN" style="left:28.7px;top:406.5px">Service Name</div>
<div class="fld" style="left:234px;top:386px;width:208px;height:40px;"></div>
<div class="lab" id="lStart" style="left:244.40px;top:406.5px;letter-spacing:0.100px">Start Time</div>
<svg class="a" style="left:418.0px;top:397.7px" width="17" height="17" viewBox="0 0 24 24"><path fill="#6b6b6b" d="M11.99 2C6.47 2 2 6.48 2 12s4.47 10 9.99 10C17.52 22 22 17.52 22 12S17.52 2 11.99 2zM12 20c-4.42 0-8-3.58-8-8s3.580-8 8-8 8 3.580 8 8-3.580 8-8 8zm.5-13H11v6l5.250 3.150.750-1.230-4.500-2.670z"/></svg>
<div class="fld" style="left:450px;top:386px;width:208px;height:40px;"></div>
<div class="lab" id="lEnd" style="left:460.50px;top:406.5px;letter-spacing:-0.086px">End Time</div>
<svg class="a" style="left:633.7px;top:397.7px" width="17" height="17" viewBox="0 0 24 24"><path fill="#6b6b6b" d="M11.99 2C6.47 2 2 6.48 2 12s4.47 10 9.99 10C17.52 22 22 17.52 22 12S17.52 2 11.99 2zM12 20c-4.42 0-8-3.58-8-8s3.580-8 8-8 8 3.580 8 8-3.580 8-8 8zm.5-13H11v6l5.250 3.150.750-1.230-4.500-2.670z"/></svg>
<div class="fld" style="left:667px;top:386px;width:208px;height:40px;"></div>
<div class="lab" id="lLang" style="left:676.40px;top:406.5px;letter-spacing:0.100px">Language</div>
<div class="dd" style="left:855.8px;top:404.1px"></div>
<div class="fld" style="left:18px;top:435px;width:208px;height:40px;"></div>
<div class="lab" id="lMod" style="left:28.7px;top:455.5px;letter-spacing:0.243px">Modality</div>
<div class="dd" style="left:207.0px;top:452.8px"></div>
<div class="fld" style="left:18px;top:484px;width:424px;height:40px;"></div>
<div class="lab" id="lProv" style="left:28.7px;top:504.5px">Providers</div>
<div class="dd" style="left:424.0px;top:502.3px"></div>
<div class="fld" style="left:18px;top:533px;width:857px;height:57px;"></div>
<div class="lab" id="lNote" style="left:28.00px;top:553.5px;letter-spacing:0.100px">Note</div>
<div class="fld" style="left:18px;top:599px;width:857px;height:57px;"></div>
<div class="lab" id="lNext" style="left:28.00px;top:619.5px;letter-spacing:0.100px">Next Steps/Follow Up</div>
<div class="fld" style="left:18px;top:665px;width:208px;height:40px;"></div>
<div class="lab" id="lStaff" style="left:29px;top:685.5px;letter-spacing:-0.275px">Staff</div>
<div class="dd" style="left:207.2px;top:683.8px"></div>
<div class="t" id="pSig" style="left:17.60px;top:719px;font-size:8.700px;color:#6a6a6a;letter-spacing:.2px">Participant Signature</div>
<div class="t" id="sSig" style="left:234.3px;top:719px;font-size:8.700px;color:#6a6a6a;letter-spacing:0.107px">Staff Signature</div>
<div class="lnk" id="sig1" style="left:25px;top:743.8px;font-size:9.900px;-webkit-text-stroke:.4px #26478a;color:#26478a;letter-spacing:0.050px">+ SIGNATURE</div>
<div class="lnk" id="sig2" style="left:241px;top:743.8px;font-size:9.900px;-webkit-text-stroke:.4px #26478a;color:#26478a;letter-spacing:0.100px">+ SIGNATURE</div>
<div class="a" style="left:18px;top:756.5px;width:208px;height:1px;background:#ececec"></div>
<div class="a" style="left:234px;top:756.5px;width:208px;height:1px;background:#ececec"></div>
<div class="a" style="left:25.3px;top:777.3px;width:207.600px;height:40px;border:1px solid #c4c4c4"></div>
<svg class="a" style="left:115.3px;top:794.3px" width="8.200" height="8.600" viewBox="0 0 10 10.500"><path fill="#404040" d="M5 0l5 5H7.300v5.500H2.700V5H0z"/></svg>
<div class="t" id="file" style="-webkit-text-stroke:.1px #555;left:128.60px;top:800.3px;font-size:11.500px;color:#333;letter-spacing:-0.600px">File</div>
<div class="a" style="left:894px;top:0;width:6px;height:761.500px;background:linear-gradient(90deg,#959592,#8d8d8e)"></div>
</div>

</body>
</html>
